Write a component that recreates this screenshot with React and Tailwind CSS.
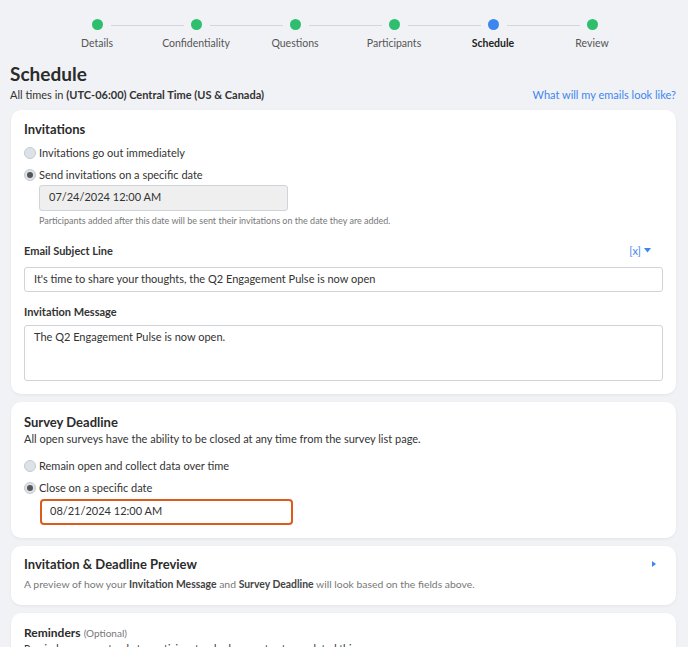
import React from 'react';

const STEPS = [
  { label: 'Details', done: true },
  { label: 'Confidentiality', done: true },
  { label: 'Questions', done: true },
  { label: 'Participants', done: true },
  { label: 'Schedule', active: true },
  { label: 'Review', done: true },
];

const Stepper = () => (
  <div className="flex justify-center pt-[19px] pl-[1px]">
    {STEPS.map((s, i) => (
      <div key={s.label} className="relative flex w-[99px] flex-col items-center">
        {i < STEPS.length - 1 && (
          <div className="absolute left-[63px] top-[6px] h-px w-[73px] bg-[#d3d6dc]" />
        )}
        <div
          className={`h-[11px] w-[11px] rounded-full ${s.active ? 'bg-[#3d86f0]' : 'bg-[#2ebf6e]'}`}
        />
        <div
          className={`mt-[8px] text-[10.5px] leading-none ${s.active ? 'font-bold text-[#222]' : 'text-[#555]'}`}
        >
          {s.label}
        </div>
      </div>
    ))}
  </div>
);

const Radio = ({ checked, label }) => (
  <div className="flex items-center gap-[3px] text-[11px] leading-[16px] text-[#333]">
    <span className="flex h-[12px] w-[12px] items-center justify-center rounded-full border border-[#c5cad3] bg-[#dde1e8]">
      {checked && <span className="h-[6px] w-[6px] rounded-full bg-[#555]" />}
    </span>
    <span>{label}</span>
  </div>
);

const Card = ({ className = '', children }) => (
  <div className={`rounded-[10px] bg-white px-[13px] shadow-[0_1px_3px_rgba(0,0,0,0.06)] ${className}`}>
    {children}
  </div>
);

const App = () => {
  return (
    <div
      className="min-h-[647px] bg-[#f1f2f5] pb-4"
      style={{ fontFamily: 'Lato, "Liberation Sans", sans-serif' }}
    >
      <Stepper />

      <div className="px-[11px] pr-[12px]">
        <h1 className="-ml-px mt-[15px] text-[19px] font-bold leading-none text-[#2b2b2b]">
          Schedule
        </h1>
        <div className="mt-[6px] flex items-center justify-between text-[11px] leading-none text-[#333]">
          <span className="-ml-px">
            All times in <b>(UTC-06:00) Central Time (US &amp; Canada)</b>
          </span>
          <span className="text-[#3d86f0]">What will my emails look like?</span>
        </div>

        <Card className="mt-[10px] pb-[13px] pt-[13px]">
          <div className="text-[13px] font-bold leading-none text-[#2b2b2b]">Invitations</div>
          <div className="mt-[9px] flex flex-col gap-[6px]">
            <Radio label="Invitations go out immediately" />
            <Radio checked label="Send invitations on a specific date" />
          </div>
          <div className="ml-[15px] mt-[2px] flex h-[26px] w-[249px] items-center rounded-[3px] border border-[#cfd3da] bg-[#efefef] px-[9px] text-[11px] text-[#333]">
            07/24/2024 12:00 AM
          </div>
          <div className="ml-[15px] mt-[5px] text-[9px] leading-[10px] text-[#777]">
            Participants added after this date will be sent their invitations on the date they are added.
          </div>

          <div className="mt-[18px] flex items-center justify-between pr-[12px] leading-[14px]">
            <span className="text-[11px] font-bold text-[#333]">Email Subject Line</span>
            <span className="flex items-center gap-[3px] text-[11px] text-[#3d86f0]">
              [x]
              <svg width="7" height="5" viewBox="0 0 7 5">
                <path d="M0 0 L7 0 L3.5 4.5 Z" fill="#3d86f0" />
              </svg>
            </span>
          </div>
          <div className="mt-[9px] flex h-[25px] items-center rounded-[3px] border border-[#cfd3da] px-[9px] text-[11px] text-[#333]">
            It's time to share your thoughts, the Q2 Engagement Pulse is now open
          </div>

          <div className="mt-[13px] text-[11px] font-bold leading-[14px] text-[#333]">Invitation Message</div>
          <div className="mt-[6px] h-[56px] rounded-[3px] border border-[#cfd3da] px-[9px] pt-[3px] text-[11px] text-[#333]">
            The Q2 Engagement Pulse is now open.
          </div>
        </Card>

        <Card className="mt-[8px] pb-[13px] pt-[14px]">
          <div className="text-[13px] font-bold leading-none text-[#2b2b2b]">Survey Deadline</div>
          <div className="mt-[3px] text-[11px] leading-[14px] text-[#333]">
            All open surveys have the ability to be closed at any time from the survey list page.
          </div>
          <div className="mt-[12px] flex flex-col gap-[6px]">
            <Radio label="Remain open and collect data over time" />
            <Radio checked label="Close on a specific date" />
          </div>
          <div className="ml-[16px] mt-[3px] flex h-[26px] w-[253px] items-center rounded-[4px] border-2 border-[#e05a1c] px-[8px] text-[11px] text-[#333]">
            08/21/2024 12:00 AM
          </div>
        </Card>

        <Card className="mt-[8px] pb-[14px] pt-[10px]">
          <div className="flex items-center justify-between pr-[7px] leading-[16px]">
            <span className="text-[13px] font-bold text-[#2b2b2b]">Invitation &amp; Deadline Preview</span>
            <svg width="4" height="6" viewBox="0 0 4 6">
              <path d="M0 0 L4 3 L0 6 Z" fill="#3d86f0" />
            </svg>
          </div>
          <div className="mt-[5px] text-[10.4px] leading-[14px] text-[#777]">
            A preview of how your <b className="text-[#444]">Invitation Message</b> and{' '}
            <b className="text-[#444]">Survey Deadline</b> will look based on the fields above.
          </div>
        </Card>

        <Card className="mt-[8px] pb-[14px] pt-[12px]">
          <div className="text-[12px] leading-[16px] text-[#2b2b2b]">
            <b>Reminders</b> <span className="text-[10px] text-[#777]">(Optional)</span>
          </div>
          <div className="mt-[1px] text-[10.5px] leading-[14px] text-[#333]">
            Reminders are sent only to participants who have not yet completed this survey.
          </div>
        </Card>
      </div>
    </div>
  );
};

export default App;
